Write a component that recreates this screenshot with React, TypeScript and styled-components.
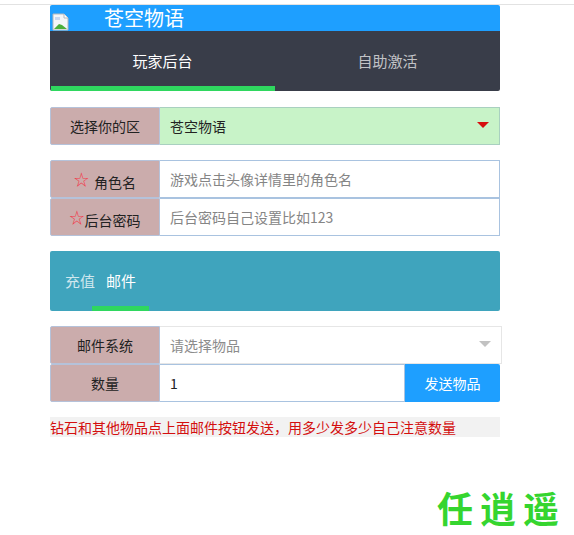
import styled, { createGlobalStyle } from "styled-components";

const GlobalStyle = createGlobalStyle`
  html, body {
    margin: 0;
    padding: 0;
    background: #fff;
    font-family: "Noto Sans CJK SC", "Liberation Sans", sans-serif;
    font-size: 14px;
    color: #333;
  }
`;

const Page = styled.div`
  position: relative;
  height: 535px;
  padding-top: 4px;
  box-sizing: border-box;
  border-top: 0;
  overflow: hidden;
  &::before {
    content: "";
    display: block;
    height: 1px;
    background: #e2e2e2;
  }
`;

const Wrapper = styled.div`
  width: 450px;
  margin-left: 50px;
`;

const Banner = styled.div`
  display: flex;
  align-items: center;
  height: 26px;
  background: #1e9fff;
  border-radius: 2px 2px 0 0;
  color: #fff;
  font-size: 20px;
  line-height: 26px;
`;

const BrokenIcon = styled.svg`
  width: 18px;
  height: 18px;
  margin: 8px 34px 0 2px;
  flex: none;
`;

const Nav = styled.div`
  display: flex;
  height: 60px;
  background: #393d49;
  border-radius: 0 0 2px 2px;
  margin-bottom: 16px;
`;

const NavItem = styled.div<{ $active?: boolean }>`
  position: relative;
  flex: 1;
  text-align: center;
  line-height: 60px;
  font-size: 15px;
  color: ${(p) => (p.$active ? "#fff" : "rgba(255, 255, 255, 0.7)")};
  &::after {
    content: "";
    display: ${(p) => (p.$active ? "block" : "none")};
    position: absolute;
    left: 1px;
    right: 0;
    bottom: 0;
    height: 5px;
    background: #2fd75f;
  }
`;

const Group = styled.div<{ $gap?: number }>`
  margin-bottom: ${(p) => p.$gap ?? 15}px;
`;

const Row = styled.div`
  display: flex;
  height: 38px;
`;

const Label = styled.label`
  flex: none;
  width: 110px;
  height: 38px;
  box-sizing: border-box;
  border: 1px solid #b5c2da;
  border-right-width: 1px;
  border-radius: 2px 0 0 2px;
  background: #cbacac;
  color: #222;
  text-align: center;
  line-height: 36px;
  font-size: 14px;
`;

const Star = styled.span<{ $space?: boolean }>`
  color: #f2394a;
  font-size: 15px;
  vertical-align: 3px;
  margin-right: ${(p) => (p.$space ? 5 : 0)}px;
`;

const Input = styled.input`
  flex: 1;
  min-width: 0;
  height: 38px;
  box-sizing: border-box;
  border: 1px solid #a9c3e0;
  border-left: 0;
  padding: 0 10px;
  background: #fff;
  font: inherit;
  color: #222;
  outline: none;
  &::placeholder {
    color: #858585;
    opacity: 1;
  }
`;

const Select = styled.div<{ $bg?: string; $edge?: string; $over?: number }>`
  display: flex;
  align-items: center;
  justify-content: space-between;
  flex: none;
  width: ${(p) => 340 + (p.$over ?? 0)}px;
  height: 38px;
  box-sizing: border-box;
  border: 1px solid ${(p) => p.$edge ?? "#a9c3e0"};
  border-left: 0;
  padding: 0 10px;
  background: ${(p) => p.$bg ?? "#fff"};
`;

const SelectText = styled.span<{ $muted?: boolean }>`
  color: ${(p) => (p.$muted ? "#8c8c8c" : "#222")};
`;

const Caret = styled.i<{ $color: string }>`
  display: block;
  width: 0;
  height: 0;
  border-style: solid;
  border-width: 6px 6px 0;
  border-color: ${(p) => p.$color} transparent transparent;
  margin-top: -2px;
`;

const Tabs = styled.div`
  display: flex;
  height: 60px;
  padding-left: 0;
  background: #3fa4bd;
  border-radius: 2px;
  margin-bottom: 15px;
`;

const TabItem = styled.div<{ $active?: boolean }>`
  position: relative;
  padding: 0 15px 0 ${(p) => (p.$active ? 14 : 15)}px;
  margin-left: ${(p) => (p.$active ? -4 : 0)}px;
  width: ${(p) => (p.$active ? 57 : 46)}px;
  box-sizing: border-box;
  line-height: 60px;
  font-size: 15px;
  white-space: nowrap;
  color: ${(p) => (p.$active ? "#fff" : "rgba(255, 255, 255, 0.75)")};
  &::after {
    content: "";
    display: ${(p) => (p.$active ? "block" : "none")};
    position: absolute;
    left: 0;
    right: 0;
    bottom: 0;
    height: 5px;
    background: #2fd75f;
  }
`;

const SendButton = styled.button`
  flex: none;
  width: 95px;
  height: 38px;
  border: 0;
  border-radius: 0 2px 2px 0;
  background: #1e9fff;
  color: #fff;
  font: inherit;
  padding: 0;
`;

const Note = styled.div`
  height: 20px;
  line-height: 20px;
  background: #f2f2f2;
  color: #d40f0f;
  font-size: 14px;
  white-space: nowrap;
`;

const Watermark = styled.div`
  position: absolute;
  left: 437px;
  top: 485px;
  display: flex;
  gap: 7px;
  font-size: 36px;
  line-height: 44px;
  font-weight: 700;
  color: #35d52f;
`;

export default function App() {
  return (
    <Page>
      <GlobalStyle />
      <Wrapper>
        <Banner>
          <BrokenIcon viewBox="0 0 18 18">
            <path d="M1 1h11l4 4v12H1z" fill="#f4f6f8" stroke="#b4b8bc" />
            <path d="M12 1v4h4" fill="#fff" stroke="#b4b8bc" />
            <path d="M2 16l5-5 3 1 5 4z" fill="#4caf3c" />
            <path d="M3 4h5v3H3z" fill="#c9d8f0" />
          </BrokenIcon>
          苍空物语
        </Banner>
        <Nav>
          <NavItem $active>玩家后台</NavItem>
          <NavItem>自助激活</NavItem>
        </Nav>

        <Group>
          <Row>
            <Label>选择你的区</Label>
            <Select $bg="#c8f3c8" $edge="#a9d0c0">
              <SelectText>苍空物语</SelectText>
              <Caret $color="#d60f0f" />
            </Select>
          </Row>
        </Group>

        <Group>
          <Row>
            <Label>
              <Star $space>☆</Star>角色名
            </Label>
            <Input placeholder="游戏点击头像详情里的角色名" />
          </Row>
          <Row>
            <Label>
              <Star>☆</Star>后台密码
            </Label>
            <Input placeholder="后台密码自己设置比如123" />
          </Row>
        </Group>

        <Tabs>
          <TabItem>充值</TabItem>
          <TabItem $active>邮件</TabItem>
        </Tabs>

        <Group>
          <Row>
            <Label>邮件系统</Label>
            <Select $edge="#e6e6e6" $over={2}>
              <SelectText $muted>请选择物品</SelectText>
              <Caret $color="#c2c2c2" />
            </Select>
          </Row>
          <Row>
            <Label>数量</Label>
            <Input defaultValue="1" />
            <SendButton>发送物品</SendButton>
          </Row>
        </Group>

        <Note>钻石和其他物品点上面邮件按钮发送，用多少发多少自己注意数量</Note>
      </Wrapper>
      <Watermark>
        <span>任</span>
        <span>逍</span>
        <span>遥</span>
      </Watermark>
    </Page>
  );
}
